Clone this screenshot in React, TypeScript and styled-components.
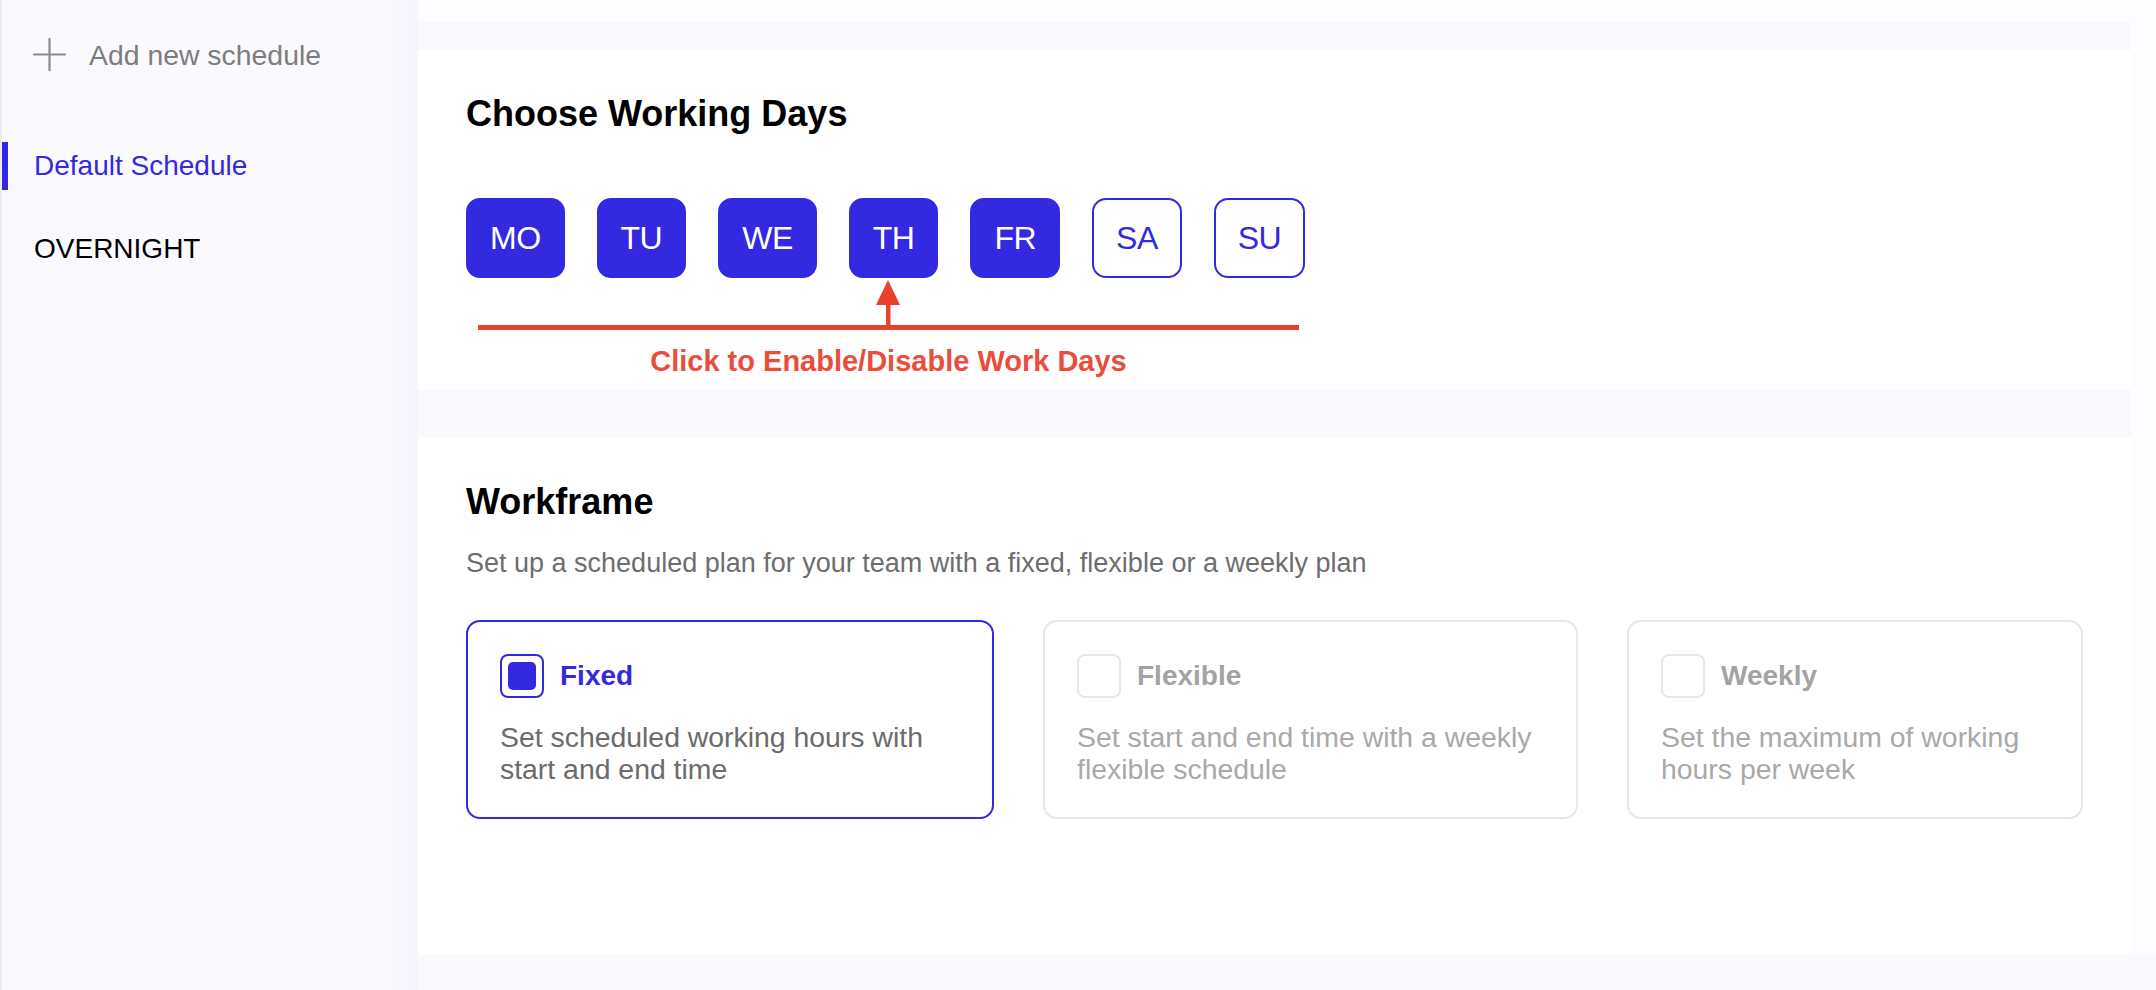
import styled, { createGlobalStyle } from 'styled-components';
import { useState } from 'react';

const BLUE = '#3229e0';

const GlobalStyle = createGlobalStyle`
  html, body {
    margin: 0;
    padding: 0;
    background: #f9f9fd;
    font-family: 'Liberation Sans', Arial, Helvetica, sans-serif;
  }
  * {
    box-sizing: border-box;
  }
`;

type DayKey = 'MO' | 'TU' | 'WE' | 'TH' | 'FR' | 'SA' | 'SU';
const DAYS: DayKey[] = ['MO', 'TU', 'WE', 'TH', 'FR', 'SA', 'SU'];

type PlanKey = 'fixed' | 'flexible' | 'weekly';
const PLANS: { key: PlanKey; label: string; desc: string }[] = [
  { key: 'fixed', label: 'Fixed', desc: 'Set scheduled working hours with start and end time' },
  { key: 'flexible', label: 'Flexible', desc: 'Set start and end time with a weekly flexible schedule' },
  { key: 'weekly', label: 'Weekly', desc: 'Set the maximum of working hours per week' },
];

const PlusIcon = () => (
  <svg width="33" height="33" viewBox="0 0 33 33" fill="none">
    <path d="M16.5 1v31M1 16.5h31" stroke="#8a8a8a" strokeWidth="2.2" strokeLinecap="round" />
  </svg>
);

// red pointer drawn over the day row
const ClickHint = () => (
  <svg width="821" height="52" viewBox="0 0 821 52">
    <rect x="0" y="45" width="821" height="5" fill="#e8412c" />
    <rect x="408" y="20" width="4.5" height="28" fill="#e8412c" />
    <polygon points="398,25 422,25 410,0" fill="#e8412c" />
  </svg>
);

const App = () => {
  const [days, setDays] = useState<DayKey[]>(['MO', 'TU', 'WE', 'TH', 'FR']);
  const [plan, setPlan] = useState<PlanKey>('fixed');
  const [schedule, setSchedule] = useState<string>('Default Schedule');

  const toggleDay = (day: DayKey) => {
    setDays((prev) => (prev.includes(day) ? prev.filter((d) => d !== day) : [...prev, day]));
  };

  return (
    <>
      <GlobalStyle />
      <Page>
        <Sidebar>
          <AddRow>
            <PlusIcon />
            <span>Add new schedule</span>
          </AddRow>
          <ScheduleList>
            {['Default Schedule', 'OVERNIGHT'].map((name) => (
              <ScheduleItem key={name} $active={schedule === name} onClick={() => setSchedule(name)}>
                {name}
              </ScheduleItem>
            ))}
          </ScheduleList>
        </Sidebar>

        <Main>
          <Column>
            <DaysCard>
              <CardTitle>Choose Working Days</CardTitle>
              <DayRow>
                {DAYS.map((d) => (
                  <DayButton key={d} $on={days.includes(d)} onClick={() => toggleDay(d)}>
                    {d}
                  </DayButton>
                ))}
              </DayRow>
              <Annotation>
                <ClickHint />
                <AnnotationText>Click to Enable/Disable Work Days</AnnotationText>
              </Annotation>
            </DaysCard>

            <FrameCard>
              <CardTitle>Workframe</CardTitle>
              <Subtitle>Set up a scheduled plan for your team with a fixed, flexible or a weekly plan</Subtitle>
              <OptionGrid>
                {PLANS.map((p) => (
                  <OptionCard key={p.key} $selected={plan === p.key} onClick={() => setPlan(p.key)}>
                    <OptionHead>
                      <Checkbox $checked={plan === p.key}>{plan === p.key && <CheckFill />}</Checkbox>
                      <OptionLabel $selected={plan === p.key}>{p.label}</OptionLabel>
                    </OptionHead>
                    <OptionDesc $selected={plan === p.key}>{p.desc}</OptionDesc>
                  </OptionCard>
                ))}
              </OptionGrid>
            </FrameCard>
          </Column>
        </Main>
      </Page>
    </>
  );
};

export default App;

const Page = styled.div`
  display: flex;
  width: 100%;
  height: 990px;
  background: #f9f9fd;
`;

const Sidebar = styled.aside`
  width: 418px;
  flex-shrink: 0;
  height: 100%;
  padding-top: 38px;
  border-left: 2px solid #ececf0;
  background: #fafafe;
  box-shadow: inset -50px 0 40px -40px rgba(90, 90, 200, 0.05);
`;

const AddRow = styled.div`
  display: flex;
  align-items: center;
  gap: 23px;
  height: 33px;
  padding-left: 31px;
  font-size: 28.4px;
  line-height: 32px;
  color: #7d7d7d;
  cursor: pointer;
`;

const ScheduleList = styled.div`
  display: flex;
  flex-direction: column;
  gap: 35px;
  margin-top: 71px;
`;

const ScheduleItem = styled.div<{ $active: boolean }>`
  height: 48px;
  line-height: 48px;
  padding-left: 26px;
  border-left: 6px solid ${(p) => (p.$active ? BLUE : 'transparent')};
  font-size: 28px;
  color: ${(p) => (p.$active ? BLUE : '#000')};
  cursor: pointer;
`;

const Main = styled.main`
  flex: 1;
  height: 955px;
  padding: 22px 25px 0 0;
  background: #fdfdff;
`;

const Column = styled.div`
  display: flex;
  flex-direction: column;
  gap: 47px;
  height: 100%;
  padding-top: 28px;
  background: #f8f8fd;
`;

const DaysCard = styled.section`
  background: #fff;
  padding: 42px 48px 13px;
`;

const FrameCard = styled.section`
  flex: 1;
  background: #fff;
  padding: 43px 48px 0;
`;

const CardTitle = styled.h2`
  margin: 0;
  font-size: 36px;
  line-height: 44px;
  font-weight: 700;
  color: #000;
`;

const DayRow = styled.div`
  display: flex;
  gap: 32px;
  margin-top: 62px;
`;

const DayButton = styled.button<{ $on: boolean }>`
  height: 80px;
  padding: 0 22px;
  border-radius: 14px;
  border: 2px solid ${BLUE};
  background: ${(p) => (p.$on ? BLUE : '#fff')};
  color: ${(p) => (p.$on ? '#fff' : BLUE)};
  font-family: inherit;
  font-size: 32px;
  letter-spacing: -0.5px;
  cursor: pointer;
`;

const Annotation = styled.div`
  display: flex;
  flex-direction: column;
  align-items: center;
  width: 821px;
  margin: 2px 0 0 12px;
`;

const AnnotationText = styled.div`
  margin-top: 13px;
  font-size: 29px;
  line-height: 32px;
  font-weight: 700;
  color: #ea4d3b;
`;

const Subtitle = styled.p`
  margin: 23px 0 0;
  font-size: 27px;
  line-height: 32px;
  color: #6d6d70;
`;

const OptionGrid = styled.div`
  display: grid;
  grid-template-columns: 528fr 535fr 456fr;
  gap: 49px;
  margin-top: 41px;
`;

const OptionCard = styled.div<{ $selected: boolean }>`
  height: 199px;
  padding: 32px 32px 0;
  border-radius: 14px;
  border: 2px solid ${(p) => (p.$selected ? BLUE : '#e7e7e9')};
  cursor: pointer;
`;

const OptionHead = styled.div`
  display: flex;
  align-items: center;
  gap: 16px;
`;

const Checkbox = styled.div<{ $checked: boolean }>`
  display: flex;
  align-items: center;
  justify-content: center;
  width: 44px;
  height: 44px;
  border-radius: 8px;
  border: 2px solid ${(p) => (p.$checked ? BLUE : '#e7e7e9')};
`;

const CheckFill = styled.span`
  width: 28px;
  height: 28px;
  border-radius: 5px;
  background: ${BLUE};
`;

const OptionLabel = styled.span<{ $selected: boolean }>`
  font-size: 28px;
  font-weight: 700;
  color: ${(p) => (p.$selected ? BLUE : '#a3a3a3')};
`;

const OptionDesc = styled.p<{ $selected: boolean }>`
  margin: 23px 0 0;
  font-size: 28.4px;
  line-height: 32px;
  color: ${(p) => (p.$selected ? '#6b6b6b' : '#a9a9a9')};
`;
